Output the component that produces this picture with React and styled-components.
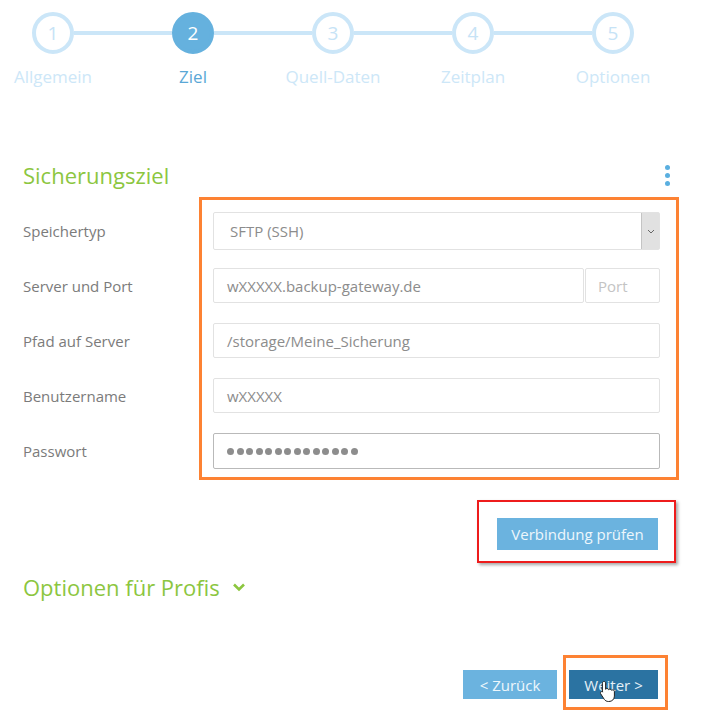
import React from 'react';
import styled, { createGlobalStyle } from 'styled-components';

const GlobalStyle = createGlobalStyle`
  html, body {
    margin: 0;
    padding: 0;
    background: #fff;
  }
  body {
    font-family: "Open Sans", "Noto Sans", "Liberation Sans", sans-serif;
  }
`;

const Page = styled.div`
  width: 718px;
  height: 727px;
  padding: 12px 0 0 23px;
  box-sizing: border-box;
  position: relative;
`;

const Stepper = styled.div`
  display: flex;
  align-items: flex-start;
  margin-left: 9px;
`;

const Step = styled.div`
  width: 42px;
  display: flex;
  flex-direction: column;
  align-items: center;
`;

const Circle = styled.div`
  width: 42px;
  height: 42px;
  box-sizing: border-box;
  border-radius: 50%;
  border: 4px solid ${p => (p.active ? '#65b1de' : '#cbe6f8')};
  background: ${p => (p.active ? '#65b1de' : '#fff')};
  color: ${p => (p.active ? '#fff' : '#c6e3f6')};
  font-size: 19px;
  display: flex;
  align-items: center;
  justify-content: center;
`;

const StepLabel = styled.div`
  margin-top: 12px;
  white-space: nowrap;
  font-size: 17px;
  line-height: 22px;
  color: ${p => (p.active ? '#5aa7d6' : '#cde7f8')};
`;

const Connector = styled.div`
  width: 98px;
  height: 4px;
  margin-top: 19px;
  background: #cbe6f8;
`;

const SectionHead = styled.div`
  display: flex;
  align-items: center;
  justify-content: space-between;
  width: 650px;
  margin-top: 72px;
  height: 30px;
`;

const Title = styled.h2`
  margin: 0;
  font-weight: 400;
  font-size: 22px;
  line-height: 30px;
  color: #8cc63f;
  display: flex;
  align-items: center;
  gap: 12px;
`;

const Kebab = styled.div`
  display: flex;
  flex-direction: column;
  gap: 3px;
  margin-right: 3px;
  span {
    width: 5px;
    height: 5px;
    border-radius: 50%;
    background: #5aafe0;
  }
`;

const Form = styled.div`
  display: flex;
  margin-top: 7px;
`;

const Labels = styled.div`
  width: 176px;
  padding-top: 15px;
  display: flex;
  flex-direction: column;
`;

const FieldLabel = styled.div`
  height: ${p => p.h}px;
  margin-bottom: ${p => p.mb || 0}px;
  display: flex;
  align-items: center;
  font-size: 15px;
  font-weight: 500;
  color: #7b7b7b;
`;

const Highlight = styled.div`
  width: 480px;
  box-sizing: border-box;
  border: 3px solid #fd8233;
  padding: 12px 16px 8px 11px;
  display: flex;
  flex-direction: column;
`;

const Field = styled.div`
  height: ${p => p.h}px;
  margin-bottom: ${p => p.mb || 0}px;
  box-sizing: border-box;
  border: 1px solid ${p => (p.dark ? '#b9b9b9' : '#e2e2e2')};
  border-radius: 2px;
  display: flex;
  align-items: center;
  padding-left: ${p => p.pl || 13}px;
  font-size: 15px;
  color: ${p => (p.faint ? '#c4c4c4' : '#8c8c8c')};
  background: #fff;
  flex: ${p => p.flex || 'none'};
  width: ${p => (p.w ? `${p.w}px` : 'auto')};
`;

const SelectBox = styled(Field)`
  padding-right: 0;
  align-items: stretch;
  span {
    flex: 1;
    display: flex;
    align-items: center;
  }
`;

const ArrowBox = styled.div`
  width: 17px;
  background: #e1e1e1;
  border-left: 1px solid #c4c4c4;
  display: flex;
  align-items: center;
  justify-content: center;
`;

const SplitRow = styled.div`
  display: flex;
  gap: 1px;
  margin-bottom: 20px;
`;

const Dots = styled.div`
  display: flex;
  gap: 2.5px;
  span {
    width: 7px;
    height: 7px;
    border-radius: 50%;
    background: #8d8d8d;
  }
`;

const CheckRow = styled.div`
  display: flex;
  justify-content: flex-end;
  width: 653px;
  margin-top: 20px;
`;

const RedBox = styled.div`
  border: 2px solid #ee1c1c;
  box-shadow: 2px 2px 3px rgba(0, 0, 0, 0.35);
  padding: 16px 16px 11px 18px;
`;

const Button = styled.button`
  border: none;
  border-radius: 0;
  background: ${p => (p.primary ? '#2b73a2' : '#6bb3df')};
  color: ${p => (p.primary ? '#e6f0f7' : '#eef7fc')};
  font-family: inherit;
  font-size: 15px;
  width: ${p => p.w}px;
  height: ${p => p.h}px;
  margin-bottom: ${p => p.mb || 0}px;
  padding: 0;
  cursor: pointer;
  position: relative;
`;

const ProHead = styled(Title)`
  margin-top: 9px;
`;

const Footer = styled.div`
  display: flex;
  justify-content: flex-end;
  align-items: flex-end;
  width: 645px;
  margin-top: 53px;
  gap: 6px;
`;

const OrangeFrame = styled.div`
  border: 3px solid #fd8233;
  padding: 12px 7px 8px 3px;
`;

const Pointer = styled.svg`
  position: absolute;
  left: 30px;
  top: 10px;
`;

const steps = ['Allgemein', 'Ziel', 'Quell-Daten', 'Zeitplan', 'Optionen'];

export default function App() {
  return (
    <Page>
      <GlobalStyle />
      <Stepper>
        {steps.map((s, i) => (
          <React.Fragment key={s}>
            {i > 0 && <Connector />}
            <Step>
              <Circle active={i === 1}>{i + 1}</Circle>
              <StepLabel active={i === 1}>{s}</StepLabel>
            </Step>
          </React.Fragment>
        ))}
      </Stepper>

      <SectionHead>
        <Title>Sicherungsziel</Title>
        <Kebab><span /><span /><span /></Kebab>
      </SectionHead>

      <Form>
        <Labels>
          <FieldLabel h={38} mb={18}>Speichertyp</FieldLabel>
          <FieldLabel h={35} mb={20}>Server und Port</FieldLabel>
          <FieldLabel h={35} mb={20}>Pfad auf Server</FieldLabel>
          <FieldLabel h={35} mb={20}>Benutzername</FieldLabel>
          <FieldLabel h={36}>Passwort</FieldLabel>
        </Labels>
        <Highlight>
          <SelectBox h={38} mb={18} pl={16}>
            <span>SFTP (SSH)</span>
            <ArrowBox>
              <svg width="8" height="5" viewBox="0 0 8 5">
                <path d="M1 1l3 3 3-3" fill="none" stroke="#666" strokeWidth="1" />
              </svg>
            </ArrowBox>
          </SelectBox>
          <SplitRow>
            <Field h={35} flex="1">wXXXXX.backup-gateway.de</Field>
            <Field h={35} w={75} pl={12} faint>Port</Field>
          </SplitRow>
          <Field h={35} mb={20}>/storage/Meine_Sicherung</Field>
          <Field h={35} mb={20}>wXXXXX</Field>
          <Field h={36} dark>
            <Dots>
              {Array.from({ length: 14 }).map((_, i) => <span key={i} />)}
            </Dots>
          </Field>
        </Highlight>
      </Form>

      <CheckRow>
        <RedBox>
          <Button w={161} h={32}>Verbindung prüfen</Button>
        </RedBox>
      </CheckRow>

      <ProHead>
        Optionen für Profis
        <svg width="14" height="10" viewBox="0 0 14 10">
          <path d="M2 2.5l5 5 5-5" fill="none" stroke="#8cc63f" strokeWidth="2.6" />
        </svg>
      </ProHead>

      <Footer>
        <Button w={94} h={29} mb={11}>&lt; Zurück</Button>
        <OrangeFrame>
          <Button primary w={89} h={29}>
            Weiter &gt;
            <Pointer width="17" height="22" viewBox="0 0 17 22">
              <path
                d="M5 1.5c.9 0 1.6.7 1.6 1.6v6.2c.3-.5.9-.8 1.5-.8.8 0 1.4.5 1.6 1.2.3-.4.8-.6 1.3-.6.8 0 1.4.5 1.6 1.2.3-.3.7-.4 1.1-.4 1 0 1.7.8 1.7 1.7v4.5c0 3.1-2.3 5.4-5.4 5.4H9.4c-1.7 0-3.1-.8-4.1-2.1L1.7 13.8c-.5-.7-.3-1.6.4-2 .6-.4 1.4-.3 1.9.3l-.6-.8V3.1c0-.9.7-1.6 1.6-1.6z"
                fill="#fff"
                stroke="#222"
                strokeWidth="1"
              />
            </Pointer>
          </Button>
        </OrangeFrame>
      </Footer>
    </Page>
  );
}
